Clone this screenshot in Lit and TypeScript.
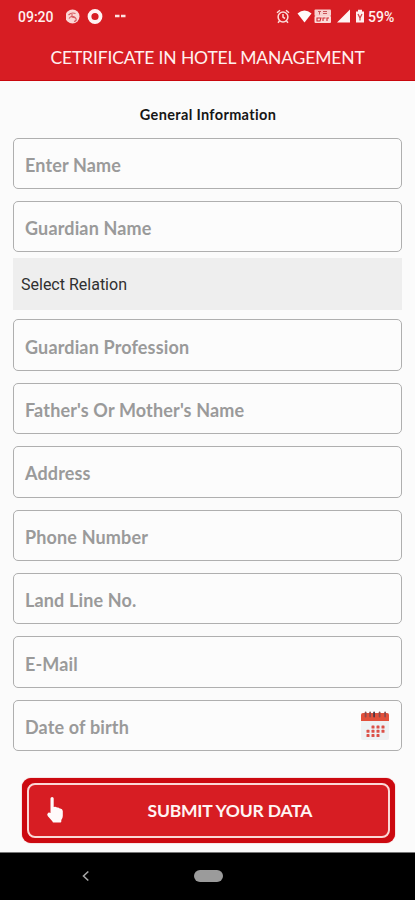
import { LitElement, html, css, svg } from "lit";
import { customElement } from "lit/decorators.js";

const calendar = html`<svg class="calendar" viewBox="0 0 30 31" width="30" height="31">
  <rect x="1" y="3" width="28" height="27" rx="2" fill="#eef2f4" />
  <path d="M1 11V5q0-2 2-2h24q2 0 2 2v6z" fill="#e2503b" />
  ${[5.5, 10, 14, 19.5, 25].map((x, i) => svg`<rect x=${x - 0.8} y="1.5" width="1.8" height="6" rx=".9" fill=${i === 2 ? "#4b3442" : "#8d4b4d"} />`)}
  ${[[12, 17], [17, 17], [22, 17], [7, 21.3], [12, 21.3], [17, 21.3], [22, 21.3], [7, 25.6], [12, 25.6], [17, 25.6]].map(
    ([x, y]) => svg`<rect x=${x - 0.5} y=${y - 1.5} width="3" height="3" rx=".6" fill="#dc5148" />`
  )}
</svg>`;

const fieldsAbove = ["Enter Name", "Guardian Name"];
const fieldsBelow = ["Guardian Profession", "Father's Or Mother's Name", "Address", "Phone Number", "Land Line No.", "E-Mail", "Date of birth"];

@customElement("app-root")
export class AppRoot extends LitElement {
  static styles = css`
    :host {
      display: flex;
      flex-direction: column;
      width: 415px;
      height: 900px;
      box-sizing: border-box;
      overflow: hidden;
      background: #fbfbfb;
      font-family: Lato, "Open Sans", sans-serif;
    }
    * { box-sizing: border-box; }
    svg { display: block; flex: none; }
    .header {
      height: 81px;
      flex: none;
      background: #d71d23;
      border-bottom: 1px solid #c9070d;
      color: #fff0ef;
    }
    .status {
      display: flex;
      height: 34px;
      font: 500 14px/34px Roboto, sans-serif;
    }
    .clock { width: 48px; margin-left: 18px; }
    .percent { margin-left: 3px; letter-spacing: 0; }
    .gap { flex: 1; }
    .right { display: flex; width: 140px; }
    .title {
      margin: 0;
      font-weight: 400;
      font-size: 17.5px;
      line-height: 47px;
      text-align: center;
      letter-spacing: -0.15px;
      white-space: nowrap;
    }
    .form { flex: 1; padding: 0 13px; }
    .section {
      margin: 0;
      height: 56.5px;
      padding: 24px 0 0 1px;
      font-size: 14.5px;
      line-height: 20px;
      font-weight: 700;
      font-variant-ligatures: none;
      letter-spacing: 0.34px;
      color: #161616;
      text-align: center;
    }
    .field {
      display: flex;
      align-items: center;
      justify-content: space-between;
      height: 51.4px;
      margin-bottom: 12px;
      padding: 3px 11px 0 11px;
      border: 1.5px solid #afafaf;
      border-radius: 5px;
      background: #fcfcfc;
      color: #9a9a9a;
      font-size: 18px;
      font-weight: 700;
      letter-spacing: 0.15px;
      white-space: nowrap;
    }
    .select {
      height: 52px;
      margin: -6px 0 9.2px;
      padding-left: 8px;
      background: #eeeeee;
      color: #303030;
      font: 400 16px/53px Roboto, sans-serif;
    }
    .calendar { margin-top: -3px; }
    .submit {
      display: flex;
      width: 373px;
      height: 65px;
      margin: 26.5px 0 0 8.5px;
      padding: 5px;
      border: 0;
      border-radius: 9px;
      background: #cc0910;
      box-shadow: 0 0 1px #d71d23;
    }
    .inner {
      display: flex;
      align-items: center;
      flex: 1;
      border: 2px solid #fbd8d6;
      border-radius: 8px;
      background: #d71d23;
      color: #fff4f3;
      font: 700 17.5px/24px Lato, sans-serif;
    }
    .hand { margin-left: 17.5px; }
    .label { margin-left: 81.5px; padding-top: 1px; white-space: nowrap; letter-spacing: -0.2px; }
    .nav {
      display: flex;
      flex: none;
      align-items: center;
      height: 48px;
      background: #000;
      border-top: 1px solid #777;
    }
    .back { margin-left: 81px; margin-top: -1px; }
    .pill { width: 29px; height: 12px; margin: -2px 0 0 103px; border-radius: 6px; background: #9b9b9b; }
  `;

  render() {
    return html`
      <header class="header">
        <div class="status">
          <span class="clock">09:20</span>
          <svg width="64" height="34" viewBox="66 0 64 34">
            <circle cx="72.5" cy="16.5" r="7" fill="#fbd7d5" />
            <path d="M68.5 15q3-3 7-1.500M69 18.500q3-4 6-1t-1 4M72 14v3l4 1" fill="none" stroke="#d65b60" stroke-width="1.100" />
            <circle cx="95" cy="16.500" r="5.500" fill="none" stroke="#fff3f2" stroke-width="3.800" />
            <path d="M115 16h4.500M121 16h4.500" stroke="#fde3e1" stroke-width="2.600" />
          </svg>
          <span class="gap"></span>
          <div class="right">
            <svg width="90" height="34" viewBox="275 0 90 34">
              <g fill="none" stroke="#fbdcd9" stroke-width="1.500">
                <circle cx="283" cy="17" r="4.900" />
                <path d="M283 14v3.200l2 1.300M277 12.800l3-2.600M289 12.800l-3-2.600M279.500 21l-1.500 1.800M286.500 21l1.500 1.800" />
              </g>
              <path d="M297.500 13.500q7-6 14 0l-7 9z" fill="#fffafa" />
              <rect x="314.500" y="9.500" width="16.500" height="6.500" rx="1" fill="#f8d0ce" />
              <path d="M318 11.500h3M319.500 11.500v3M323 11.500h4M323 13.500h4" stroke="#c95459" />
              <rect x="314.500" y="16" width="16.500" height="7" rx="1" fill="#fbdcda" />
              <path d="M317 18h4l-1 3h-3zM323 21v-3h2.500M327 21v-3h2" fill="none" stroke="#d02b30" stroke-width="1.100" />
              <path d="M337 22.500H350V9.500z" fill="#fff4f3" />
              <path d="M356 11.500h2v-1.800h4v1.800h2v11h-8z" fill="#fff0ef" />
              <path d="M358 14l2 4 2-4M360 18v2.500" fill="none" stroke="#d4474c" stroke-width="1.300" />
            </svg>
            <span class="percent">59%</span>
          </div>
        </div>
        <h1 class="title">CETRIFICATE IN HOTEL MANAGEMENT</h1>
      </header>
      <main class="form">
        <h2 class="section">General Information</h2>
        ${fieldsAbove.map((f) => html`<div class="field"><span>${f}</span></div>`)}
        <div class="select">Select Relation</div>
        ${fieldsBelow.map((f) => html`<div class="field"><span>${f}</span>${f === "Date of birth" ? calendar : ""}</div>`)}
        <button class="submit">
          <span class="inner">
            <svg class="hand" width="20" height="28" viewBox="0 0 20 28">
              <path d="M4.500 2.500q0-1.500 1.600-1.500t1.600 1.500v8.500q2-.8 3.300.5 1.700-.5 2.700 1 2.800-.3 3.100 2.500v5q0 2-1.500 4v1.500q0 1-1 1H7.500q-1 0-1-1l-4.800-5.500q-1.200-2 .5-3.200 1-.7 2.300.2z" fill="#fffafa" />
            </svg>
            <span class="label">SUBMIT YOUR DATA</span>
          </span>
        </button>
      </main>
      <footer class="nav">
        <svg class="back" width="10" height="14" viewBox="0 0 10 14">
          <path d="M7.300 2.500L2.500 7l4.800 4.500" fill="none" stroke="#a6a6a6" stroke-width="1.600" />
        </svg>
        <span class="pill"></span>
      </footer>
    `;
  }
}
